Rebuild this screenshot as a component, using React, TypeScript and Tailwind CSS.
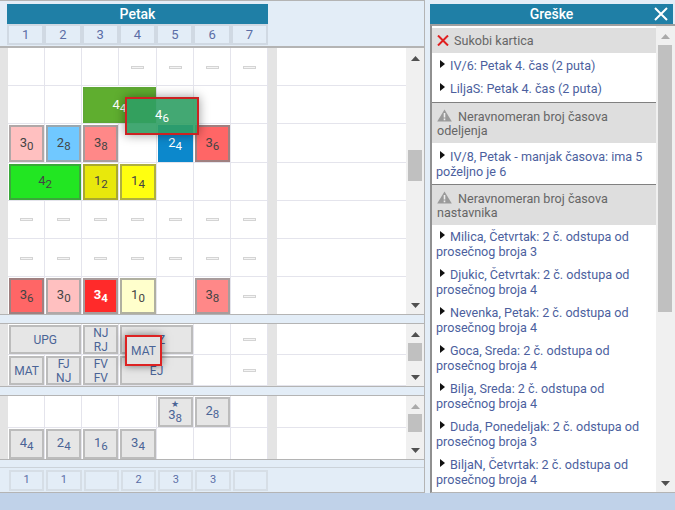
import React from "react";

type Cell = { span?: string; main?: string; sub?: string; star?: boolean; tile?: string; dash?: boolean; lines?: string[] };

const gray = "bg-[#e6e6e6] border-[#bcbcbc] text-[#4a6496]";

const topRows: Cell[][] = [
  [{}, {}, {}, { dash: true }, { dash: true }, { dash: true }, { dash: true }],
  [{}, {}, { span: "col-span-2", main: "4", sub: "4", tile: "bg-[#5fae2f] border-[#5fa835] text-white" }, {}, {}, {}],
  [
    { main: "3", sub: "0", tile: "bg-[#ffc0c0] border-[#b0a8a8] text-[#444]" },
    { main: "2", sub: "8", tile: "bg-[#70c8ff] border-[#9aa8b0] text-[#444]" },
    { main: "3", sub: "8", tile: "bg-[#ff8888] border-[#a89c9c] text-[#444]" },
    {},
    { main: "2", sub: "4", tile: "bg-[#0c88cc] border-[#0c88cc] text-white" },
    { main: "3", sub: "6", tile: "bg-[#ff6666] border-[#a08080] text-[#444]" },
    {},
  ],
  [
    { span: "col-span-2", main: "4", sub: "2", tile: "bg-[#22e622] border-[#3aa83a] text-[#444]" },
    { main: "1", sub: "2", tile: "bg-[#e8e80c] border-[#a8a830] text-[#444]" },
    { main: "1", sub: "4", tile: "bg-[#ffff10] border-[#b0b040] text-[#444]" },
    {},
    {},
    {},
  ],
  [{ dash: true }, { dash: true }, { dash: true }, { dash: true }, { dash: true }, { dash: true }, { dash: true }],
  [{ dash: true }, { dash: true }, { dash: true }, { dash: true }, { dash: true }, { dash: true }, { dash: true }],
  [
    { main: "3", sub: "6", tile: "bg-[#ff6666] border-[#a08080] text-[#444]" },
    { main: "3", sub: "0", tile: "bg-[#ffc0c0] border-[#b0a8a8] text-[#444]" },
    { main: "3", sub: "4", tile: "bg-[#ff2a2a] border-[#a89c9c] text-white font-bold" },
    { main: "1", sub: "0", tile: "bg-[#ffffcc] border-[#b0b0a0] text-[#444]" },
    {},
    { main: "3", sub: "8", tile: "bg-[#ff8888] border-[#a89c9c] text-[#444]" },
    { dash: true },
  ],
];

const midRows: Cell[][] = [
  [
    { span: "col-span-2", lines: ["UPG"], tile: gray },
    { lines: ["NJ", "RJ"], tile: gray },
    { span: "col-span-2", lines: ["FIZ"], tile: gray },
    {},
    { dash: true },
  ],
  [
    { lines: ["MAT"], tile: gray },
    { lines: ["FJ", "NJ"], tile: gray },
    { lines: ["FV", "FV"], tile: gray },
    { span: "col-span-2", lines: ["EJ"], tile: gray },
    {},
    { dash: true },
  ],
];

const lowRows: Cell[][] = [
  [{}, {}, {}, {}, { main: "3", sub: "8", star: true, tile: gray }, { main: "2", sub: "8", tile: gray }, {}],
  [
    { main: "4", sub: "4", tile: gray },
    { main: "2", sub: "4", tile: gray },
    { main: "1", sub: "6", tile: gray },
    { main: "3", sub: "4", tile: gray },
    {},
    {},
    {},
  ],
];

const errorGroups = [
  {
    title: "Sukobi kartica",
    kind: "error",
    pad: "pt-[5px] pb-[6px]",
    items: ["IV/6: Petak 4. čas (2 puta)", "LiljaS: Petak 4. čas (2 puta)"],
  },
  {
    title: "Neravnomeran broj časova odeljenja",
    kind: "warn",
    pad: "pt-[6px] pb-[5px]",
    items: ["IV/8, Petak - manjak časova: ima 5 poželjno je 6"],
  },
  {
    title: "Neravnomeran broj časova nastavnika",
    kind: "warn",
    pad: "pt-1 pb-[6px]",
    items: [
      "Milica, Četvrtak: 2 č. odstupa od prosečnog broja 3",
      "Djukic, Četvrtak: 2 č. odstupa od prosečnog broja 4",
      "Nevenka, Petak: 2 č. odstupa od prosečnog broja 4",
      "Goca, Sreda: 2 č. odstupa od prosečnog broja 4",
      "Bilja, Sreda: 2 č. odstupa od prosečnog broja 4",
      "Duda, Ponedeljak: 2 č. odstupa od prosečnog broja 3",
      "BiljaN, Četvrtak: 2 č. odstupa od prosečnog broja 4",
    ],
  },
];

function Num({ main, sub }: { main: string; sub: string }) {
  return (
    <span className="text-[13px] leading-[15px] whitespace-nowrap">
      {main}
      <span className="text-[11.5px] leading-none align-[-3px]">{sub}</span>
    </span>
  );
}

function Arrow({ up, light }: { up?: boolean; light?: boolean }) {
  return (
    <svg width="9" height="5" viewBox="0 0 9 5" className={light ? "fill-[#aaaaaa]" : "fill-[#505050]"}>
      <path d={up ? "M4.5 0 L9 5 L0 5 Z" : "M0 0 L9 0 L4.5 5 Z"} />
    </svg>
  );
}

function Scrollbar({ thumb, lightUp, width }: { thumb: string; lightUp?: boolean; width?: string }) {
  return (
    <div className={"relative shrink-0 bg-[#f0f0f0] flex flex-col items-center justify-between pt-2 pb-[6px] " + (width || "w-[18px]")}>
      <Arrow up light={lightUp} />
      <div className={"absolute left-[2px] w-[14px] bg-[#c0c0c0] " + thumb} />
      <Arrow />
    </div>
  );
}

function GridCell({ cell, height }: { cell: Cell; height: string }) {
  return (
    <div className={"border-r border-b border-[#e4e4ec] bg-white pl-px pt-px flex items-center justify-center " + height + " " + (cell.span || "")}>
      {cell.dash && <div className="w-[13px] h-[3px] bg-[#f4f4f4] border border-[#d4d4d4]" />}
      {cell.tile && (
        <div className={"w-full h-full border-2 flex flex-col items-center justify-center " + cell.tile}>
          {cell.star && <span className="text-[9px] leading-[6px] mt-[1px]">★</span>}
          {cell.main && <Num main={cell.main} sub={cell.sub || ""} />}
          {cell.lines?.map((l, i) => (
            <span key={i} className="text-[12px] leading-[14px]">
              {l}
            </span>
          ))}
        </div>
      )}
    </div>
  );
}

function Rows({ rows, height }: { rows: Cell[][]; height: string }) {
  return (
    <div className="flex-1 min-w-0 overflow-hidden bg-[#e4e4e4]">
      {rows.map((row, r) => (
        <div key={r} className="flex">
          <div className="w-2 shrink-0" />
          <div className="w-[260px] shrink-0 grid grid-cols-7">
            {row.map((c, i) => (
              <GridCell key={i} cell={c} height={height} />
            ))}
          </div>
          <div className="w-[9px] shrink-0" />
          <div className="flex-1 bg-white border-b border-[#e4e4ec]" />
        </div>
      ))}
    </div>
  );
}

function Band({ h, bottom }: { h: string; bottom?: string }) {
  return <div className={"shrink-0 bg-[#e3edf7] border-t border-b border-t-[#b4b4b4] " + (bottom || "border-b-[#b4b4b4]") + " " + h} />;
}

export default function App() {
  return (
    <div className="w-[675px] h-[510px] overflow-hidden bg-[#e3edf7] flex flex-col font-['Roboto',sans-serif]">
      <div className="h-[493px] shrink-0 flex">
        {/* raspored */}
        <div className="relative w-[425px] shrink-0 flex flex-col border-t border-r border-[#b4b4b4]">
          <div className="h-[47px] shrink-0 pt-[3px] border-b-2 border-[#b4b4b4]">
            <div className="ml-[7px] w-[261px] h-5 bg-[#1f7fa6] text-white text-[14px] font-medium leading-5 text-center">
              Petak
            </div>
            <div className="ml-[7px] w-[261px] grid grid-cols-7">
              {["1", "2", "3", "4", "5", "6", "7"].map((v) => (
                <div key={v} className="h-[21px] flex items-center justify-center border-2 border-[#d0d9e3] bg-[#e3edf7] text-[#5b6ea6] text-[13px]">
                  {v}
                </div>
              ))}
            </div>
          </div>

          <div className="h-[266px] shrink-0 flex overflow-hidden">
            <Rows rows={topRows} height="h-[38.2px]" />
            <Scrollbar thumb="top-[102px] h-[31px]" />
          </div>
          <Band h="h-[10px]" />

          <div className="h-[62px] shrink-0 flex overflow-hidden">
            <Rows rows={midRows} height="h-[31px]" />
            <Scrollbar thumb="top-[19px] h-[18px]" />
          </div>
          <Band h="h-[10px]" />

          <div className="h-[63px] shrink-0 flex overflow-hidden">
            <Rows rows={lowRows} height="h-[32px]" />
            <Scrollbar thumb="top-[18px] h-[18px]" lightUp />
          </div>
          <Band h="h-[9px]" bottom="border-b-[#ccd3da]" />

          <div className="flex-1 border-b border-[#b4b4b4] pt-[2px]">
            <div className="ml-[9px] w-[259px] grid grid-cols-7 gap-[2px]">
              {["1", "1", "", "2", "3", "3", ""].map((v, i) => (
                <div key={i} className="h-[21px] flex items-center justify-center border-2 border-[#d6dee6] bg-[#e3edf7] text-[#5b6ea6] text-[11px]">
                  {v}
                </div>
              ))}
            </div>
          </div>

          {/* kartice koje se vuku */}
          <div className="absolute left-[125px] top-[96px] w-[74px] h-[38px] border-2 border-[#cc2222] bg-[#2f9e64]/90 text-white flex items-center justify-center shadow-[0_0_10px_rgba(0,0,0,0.4)]">
            <Num main="4" sub="6" />
          </div>
          <div className="absolute left-[125px] top-[334px] w-[37px] h-[31px] border-2 border-[#dd2222] bg-[#e2e2e2] text-[#4a6496] text-[12px] flex items-center justify-center shadow-[0_0_8px_rgba(0,0,0,0.5)]">
            MAT
          </div>
        </div>

        {/* greske */}
        <div className="ml-[5px] w-[245px] flex flex-col pt-1">
          <div className="relative h-5 w-[243px] shrink-0 bg-[#1f7fa6] text-white text-[14px] font-medium leading-5 text-center">
            Greške
            <svg width="14" height="14" viewBox="0 0 14 14" className="absolute right-[5px] top-[3px]">
              <path d="M1 1 L13 13 M13 1 L1 13" stroke="#ffffff" strokeWidth="2" />
            </svg>
          </div>
          <div className="flex-1 min-h-0 flex bg-white border-l-2 border-t-2 border-b border-l-[#909090] border-t-[#a0a0a0] border-b-[#b4b4b4] overflow-hidden">
            <div className="flex-1 min-w-0 pt-[2px] overflow-hidden text-[12.6px]">
              {errorGroups.map((g, i) => (
                <div key={i} className={i > 0 ? "border-t border-[#808080]" : ""}>
                  <div className="bg-[#dedede] text-[#666666] pl-[5px] pr-1 pt-[6px] pb-[5px] leading-[14px]">
                    {g.kind === "error" ? (
                      <svg width="12" height="11" viewBox="0 0 12 11" className="inline-block mr-[5px] align-[-1px]">
                        <path d="M1 0.5 L11 10.5 M11 0.5 L1 10.5" stroke="#e02020" strokeWidth="2" />
                      </svg>
                    ) : (
                      <svg width="15" height="13" viewBox="0 0 15 13" className="inline-block mr-[6px] align-[-1px]">
                        <path d="M7.5 0.5 L14.8 12.6 L0.2 12.6 Z" fill="#9a9a9a" />
                        <path d="M6.7 4 H8.3 V8.6 H6.7 Z M6.7 9.6 H8.3 V11.2 H6.7 Z" fill="#eeeeee" />
                      </svg>
                    )}
                    {g.title}
                  </div>
                  <div className={"pl-1 pr-1 flex flex-col gap-2 leading-[15px] " + g.pad}>
                    {g.items.map((item) => (
                      <div key={item} className="text-[#4c5f9e]">
                        <svg width="5" height="8" viewBox="0 0 5 8" className="inline-block ml-1 mr-[5px] align-[2px]">
                          <path d="M0 0 L5 4 L0 8 Z" fill="#111111" />
                        </svg>
                        {item}
                      </div>
                    ))}
                  </div>
                </div>
              ))}
            </div>
            <Scrollbar thumb="top-[19px] h-[267px]" lightUp width="w-[19px]" />
          </div>
        </div>
      </div>
      <div className="flex-1 bg-[#c0d2e9]" />
    </div>
  );
}
